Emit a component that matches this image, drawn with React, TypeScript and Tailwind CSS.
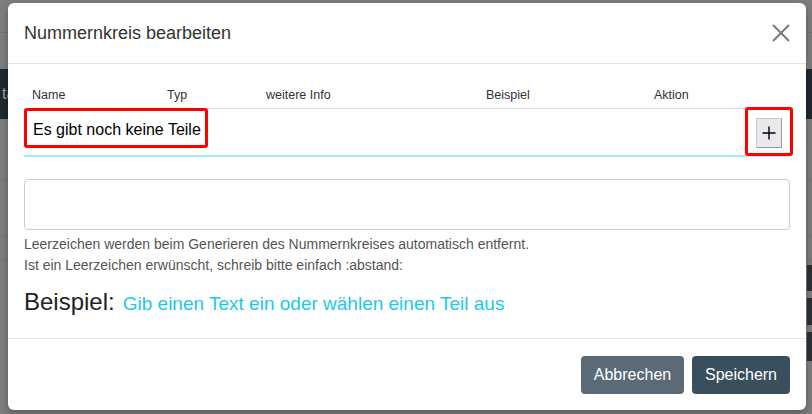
import React from 'react';

const cols = [
  { label: 'Name', w: 'w-[135px]' },
  { label: 'Typ', w: 'w-[99px]' },
  { label: 'weitere Info', w: 'w-[220px]' },
  { label: 'Beispiel', w: 'w-[168px]' },
  { label: 'Aktion', w: 'flex-1' },
];

const Backdrop: React.FC = () => (
  <div className="flex h-[414px] w-[812px] flex-col bg-[#7e7e7e]">
    <div className="h-[33px] border-b border-[#737373]" />
    <div className="h-[36px]" />
    {/* page navbar under the overlay */}
    <div className="flex h-[50px] items-center bg-[#1f2930] px-[2px] text-[16px] text-[#9aa3a8]">ta</div>
    <div className="h-[62px] border-b border-[#777]" />
    <div className="h-[56px] border-b border-[#777]" />
    <div className="flex h-[24px] justify-end border-b border-[#777]" />
    <div className="flex h-[100px] flex-col items-end gap-[7px] pt-[4px]">
      <div className="h-[28px] w-[5px] bg-[#2a3136]" />
      <div className="h-[29px] w-[5px] bg-[#2a3136]" />
      <div className="h-[32px] w-[5px] bg-[#2a3136]" />
    </div>
    <div className="flex flex-1 items-start gap-2 pl-[250px]">
      <span className="mt-[6px] h-[3px] w-[10px] bg-[#222]" />
      <span className="rounded-full border border-[#444] px-3 text-[13px] leading-[18px] text-[#333]">(Dokument-Nummer)</span>
      <span className="rounded-full border border-[#444] px-2 text-[13px] leading-[18px] text-[#333]">(Name)</span>
    </div>
  </div>
);

const App: React.FC = () => {
  return (
    <div className="relative h-[414px] w-[812px] overflow-hidden font-['Liberation_Sans',Arial,sans-serif]">
      <Backdrop />

      {/* modal */}
      <div className="absolute left-[8px] top-[3px] flex h-[407px] w-[798px] flex-col rounded-[6px] bg-white shadow-[0_3px_9px_rgba(0,0,0,0.3)]">
        <div className="flex h-[61px] items-center justify-between border-b border-[#e5e5e5] px-4">
          <h4 className="text-[18px] text-[#333]">Nummernkreis bearbeiten</h4>
          <button className="flex h-[18px] w-[18px] items-center justify-center">
            <svg width="18" height="18" viewBox="0 0 18 18" stroke="#777" strokeWidth="1.8" fill="none">
              <path d="M1 1L17 17M17 1L1 17" />
            </svg>
          </button>
        </div>

        <div className="flex h-[274px] flex-col px-4 pt-[18px]">
          <div className="flex h-[27px] items-center border-b border-[#ddd] text-[12.5px] text-[#333]">
            {cols.map((c) => (
              <div key={c.label} className={`${c.w} pl-[8px]`}>
                {c.label}
              </div>
            ))}
          </div>

          <div className="relative h-[48px] border-b-2 border-[#a6ecf8]">
            <div className="pl-[9px] pt-[11px] text-[16px] leading-[20px] text-black">Es gibt noch keine Teile</div>
            <div className="absolute left-0 top-[-1px] h-[40px] w-[184px] rounded-[3px] border-[3px] border-[#ff0000]" />
            <div className="absolute right-[-3px] top-[-2px] flex h-[49px] w-[48px] items-center justify-center rounded-[3px] border-[3px] border-[#ff0000] pt-[2px]">
              <button className="flex h-[30px] w-[26px] items-center justify-center border border-[#c8c8c8] border-b-[#9a9a9a] border-r-[#9a9a9a] bg-[#e9e9ed]">
                <svg width="14" height="14" viewBox="0 0 14 14" stroke="#000" strokeWidth="1.4">
                  <path d="M7 0.5V13.5M0.5 7H13.5" />
                </svg>
              </button>
            </div>
          </div>

          <div className="mt-[22px] h-[51px] rounded-[4px] border border-[#ccc]" />

          <div className="mt-[4px] text-[14px] leading-[21px] text-[#555]">
            <p>Leerzeichen werden beim Generieren des Nummernkreises automatisch entfernt.</p>
            <p>Ist ein Leerzeichen erwünscht, schreib bitte einfach :abstand:</p>
          </div>

          <div className="mt-[11px] flex items-baseline gap-[8px] leading-[30px]">
            <span className="text-[24px] text-[#222]">Beispiel:</span>
            <span className="text-[19px] text-[#1ec8ea]">Gib einen Text ein oder wählen einen Teil aus</span>
          </div>
        </div>

        <div className="flex flex-1 items-center justify-end gap-2 border-t border-[#e5e5e5] px-4">
          <button className="h-[38px] w-[103px] rounded-[4px] bg-[#5a6a77] text-[16px] text-white">Abbrechen</button>
          <button className="h-[38px] w-[98px] rounded-[4px] bg-[#3a4f5d] text-[16px] text-white">Speichern</button>
        </div>
      </div>
    </div>
  );
};

export default App;
